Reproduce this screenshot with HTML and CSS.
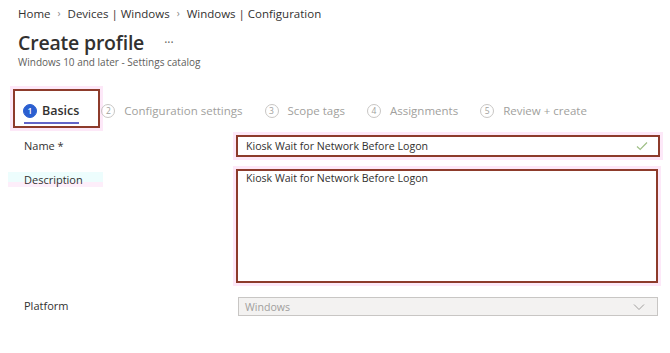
FILE: index.html
```html
<!DOCTYPE html>
<html lang="en">
<head>
    <meta charset="UTF-8">
    <meta name="viewport" content="width=device-width, initial-scale=1.0">
    <title>Create profile</title>
    <link rel="stylesheet" href="styles.css">
</head>
<body>

<div class="page">
    <!-- Breadcrumb -->
    <div class="breadcrumb">
        <span>Home</span><span class="sep">›</span>
        <span>Devices | Windows</span><span class="sep">›</span>
        <span>Windows | Configuration</span>
    </div>

    <!-- Title -->
    <div class="title-row">
        <h1>Create profile</h1>
        <span class="more">···</span>
    </div>
    <div class="subtitle">Windows 10 and later - Settings catalog</div>

    <!-- Wizard steps -->
    <div class="steps">
        <div class="step active marked">
            <span class="num">1</span><span class="label">Basics</span>
        </div>
        <div class="step"><span class="num">2</span><span class="label">Configuration settings</span></div>
        <div class="step"><span class="num">3</span><span class="label">Scope tags</span></div>
        <div class="step"><span class="num">4</span><span class="label">Assignments</span></div>
        <div class="step"><span class="num">5</span><span class="label">Review + create</span></div>
    </div>

    <!-- Form -->
    <div class="form">
        <div class="field-label">Name *</div>
        <div class="input marked">
            <span>Kiosk Wait for Network Before Logon</span>
            <svg class="check" width="12" height="10" viewBox="0 0 12 10"><path d="M1 5.5 L4.2 8.5 L11 1.5" fill="none" stroke="#9fbf86" stroke-width="1.2"/></svg>
        </div>

        <div class="field-label desc"><span class="hl">Description</span></div>
        <div class="textarea marked">Kiosk Wait for Network Before Logon</div>

        <div class="field-label platform">Platform</div>
        <div class="select">
            <span>Windows</span>
            <svg class="chev" width="12" height="8" viewBox="0 0 12 8"><path d="M1 1.5 L6 6.5 L11 1.5" fill="none" stroke="#a19f9d" stroke-width="1"/></svg>
        </div>
    </div>
</div>

</body>
</html>
```

FILE: styles.css
```css
/* Basic Reset */
* {
    margin: 0;
    padding: 0;
    box-sizing: border-box;
}
body {
    font-family: "Open Sans", "Noto Sans", sans-serif;
    background: #ffffff;
    color: #323130;
    width: 670px;
    height: 353px;
    overflow: hidden;
}
.page {
    padding: 5px 10px 0 18px;
}
/* Breadcrumb */
.breadcrumb {
    font-size: 11.5px;
    line-height: 17px;
    display: flex;
    gap: 7px;
    color: #323130;
}
.breadcrumb .sep {
    color: #8a8886;
    font-size: 10px;
}
/* Title */
.title-row {
    display: flex;
    align-items: center;
    margin-top: 7px;
    height: 26px;
}
.title-row h1 {
    font-size: 19.5px;
    font-weight: 600;
    letter-spacing: -0.2px;
}
.more {
    margin-left: 20px;
    color: #605e5c;
    font-size: 12px;
}
.subtitle {
    font-size: 10px;
    color: #605e5c;
    margin-top: 0;
}
/* Wizard steps */
.steps {
    display: flex;
    align-items: center;
    margin: 20px 0 0 -5px;
    height: 39px;
}
.step {
    display: flex;
    align-items: center;
    font-size: 11.5px;
    color: #a19f9d;
    margin-right: 22px;
    padding-top: 4px;
}
.step .num {
    width: 14px;
    height: 14px;
    border-radius: 50%;
    border: 1px solid #c8c6c4;
    font-size: 8.5px;
    display: flex;
    align-items: center;
    justify-content: center;
    margin-right: 9px;
}
.step.active {
    height: 39px;
    padding: 4px 19px 0 8px;
    color: #323130;
    font-weight: 600;
    font-size: 12.5px;
    margin-right: 1px;
}
.step.active .num {
    background: #2b5fd0;
    border-color: #2b5fd0;
    color: #ffffff;
    margin-right: 5px;
}
.step.active .label {
    position: relative;
}
.step.active .label::after {
    content: "";
    position: absolute;
    left: -18px;
    right: 0;
    bottom: -5px;
    height: 2px;
    background: #6264c8;
}
/* Annotation boxes */
.marked {
    border: 2px solid #8d3b2b !important;
    box-shadow: 0 0 0 3px #fde8f8;
}
/* Form */
.form {
    display: grid;
    grid-template-columns: 212px 1fr;
    row-gap: 12px;
    margin: 7px 0 0 6px;
    font-size: 11px;
}
.field-label {
    line-height: 22px;
}
.input {
    height: 22px;
    display: flex;
    align-items: center;
    justify-content: space-between;
    padding: 0 8px;
}
.input span {
    font-size: 10.6px;
}
.check {
    margin-right: 2px;
}
.textarea {
    height: 114px;
    padding: 0 8px;
    margin-right: 2px;
    font-size: 10.6px;
}
.desc {
    line-height: 21px;
}
.hl {
    background: #edfdfd;
    box-shadow: inset 0 -5px 0 #fdeefa;
    padding: 0 20px 0 16px;
    margin-left: -16px;
}
.platform {
    margin-top: 0;
}
.select {
    height: 19px;
    margin: 2px 2px 0 2px;
    background: #f3f2f1;
    border: 1px solid #c8c6c4;
    display: flex;
    align-items: center;
    justify-content: space-between;
    padding: 0 12px 0 6px;
    color: #a19f9d;
    font-size: 10.6px;
}
```
